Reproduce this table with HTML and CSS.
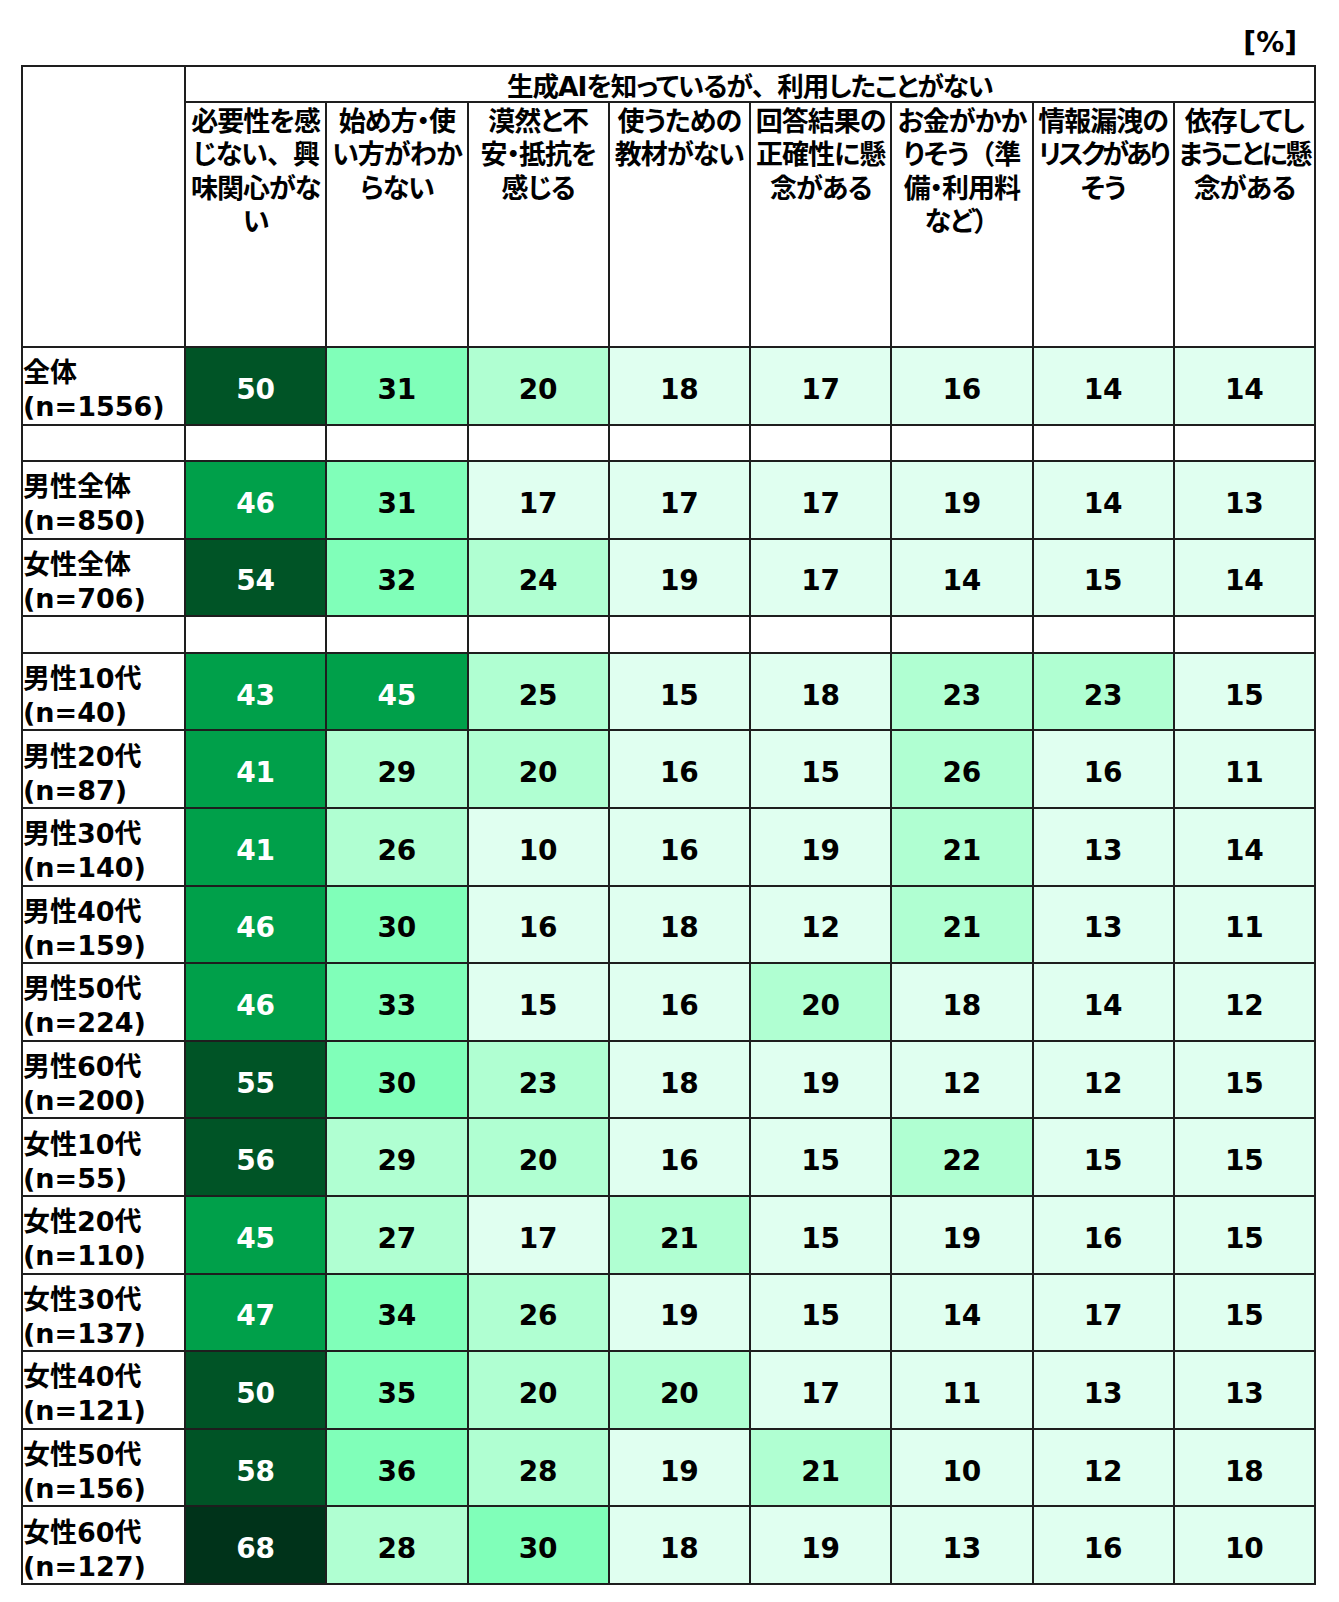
FILE: index.html
```html
<!DOCTYPE html>
<html lang="ja">
<head>
<meta charset="utf-8">
<title>生成AIを知っているが、利用したことがない理由</title>
<link rel="stylesheet" href="styles.css">
</head>
<body>
<div class="page">
  <div class="unit">[%]</div>
  <div class="grid">
    <div class="corner"></div>
    <div class="group">生成AIを知っているが<span class="fw">、</span>利用したことがない</div>
    <div class="head">必要性を感<br>じない<span class="fw">、</span>興<br>味関心がな<br>い</div>
    <div class="head">始め方・使<br>い方がわか<br>らない</div>
    <div class="head">漠然と不<br>安・抵抗を<br>感じる</div>
    <div class="head">使うための<br>教材がない</div>
    <div class="head">回答結果の<br>正確性に懸<br>念がある</div>
    <div class="head">お金がかか<br>りそう<span class="fw">（</span>準<br>備・利用料<br>など<span class="fw">）</span></div>
    <div class="head">情報漏洩の<br><span class="tight">リスクがあり</span><br>そう</div>
    <div class="head">依存してし<br><span class="snug">まうことに懸</span><br>念がある</div>

    <div class="label">全体<br>(n=1556)</div>
    <div class="cell v4">50</div><div class="cell v2">31</div><div class="cell v1">20</div><div class="cell v0">18</div><div class="cell v0">17</div><div class="cell v0">16</div><div class="cell v0">14</div><div class="cell v0">14</div>

    <div class="blank"></div><div class="blank"></div><div class="blank"></div><div class="blank"></div><div class="blank"></div><div class="blank"></div><div class="blank"></div><div class="blank"></div><div class="blank"></div>

    <div class="label">男性全体<br>(n=850)</div>
    <div class="cell v3">46</div><div class="cell v2">31</div><div class="cell v0">17</div><div class="cell v0">17</div><div class="cell v0">17</div><div class="cell v0">19</div><div class="cell v0">14</div><div class="cell v0">13</div>

    <div class="label">女性全体<br>(n=706)</div>
    <div class="cell v4">54</div><div class="cell v2">32</div><div class="cell v1">24</div><div class="cell v0">19</div><div class="cell v0">17</div><div class="cell v0">14</div><div class="cell v0">15</div><div class="cell v0">14</div>

    <div class="blank"></div><div class="blank"></div><div class="blank"></div><div class="blank"></div><div class="blank"></div><div class="blank"></div><div class="blank"></div><div class="blank"></div><div class="blank"></div>

    <div class="label">男性10代<br>(n=40)</div>
    <div class="cell v3">43</div><div class="cell v3">45</div><div class="cell v1">25</div><div class="cell v0">15</div><div class="cell v0">18</div><div class="cell v1">23</div><div class="cell v1">23</div><div class="cell v0">15</div>

    <div class="label">男性20代<br>(n=87)</div>
    <div class="cell v3">41</div><div class="cell v1">29</div><div class="cell v1">20</div><div class="cell v0">16</div><div class="cell v0">15</div><div class="cell v1">26</div><div class="cell v0">16</div><div class="cell v0">11</div>

    <div class="label">男性30代<br>(n=140)</div>
    <div class="cell v3">41</div><div class="cell v1">26</div><div class="cell v0">10</div><div class="cell v0">16</div><div class="cell v0">19</div><div class="cell v1">21</div><div class="cell v0">13</div><div class="cell v0">14</div>

    <div class="label">男性40代<br>(n=159)</div>
    <div class="cell v3">46</div><div class="cell v2">30</div><div class="cell v0">16</div><div class="cell v0">18</div><div class="cell v0">12</div><div class="cell v1">21</div><div class="cell v0">13</div><div class="cell v0">11</div>

    <div class="label">男性50代<br>(n=224)</div>
    <div class="cell v3">46</div><div class="cell v2">33</div><div class="cell v0">15</div><div class="cell v0">16</div><div class="cell v1">20</div><div class="cell v0">18</div><div class="cell v0">14</div><div class="cell v0">12</div>

    <div class="label">男性60代<br>(n=200)</div>
    <div class="cell v4">55</div><div class="cell v2">30</div><div class="cell v1">23</div><div class="cell v0">18</div><div class="cell v0">19</div><div class="cell v0">12</div><div class="cell v0">12</div><div class="cell v0">15</div>

    <div class="label">女性10代<br>(n=55)</div>
    <div class="cell v4">56</div><div class="cell v1">29</div><div class="cell v1">20</div><div class="cell v0">16</div><div class="cell v0">15</div><div class="cell v1">22</div><div class="cell v0">15</div><div class="cell v0">15</div>

    <div class="label">女性20代<br>(n=110)</div>
    <div class="cell v3">45</div><div class="cell v1">27</div><div class="cell v0">17</div><div class="cell v1">21</div><div class="cell v0">15</div><div class="cell v0">19</div><div class="cell v0">16</div><div class="cell v0">15</div>

    <div class="label">女性30代<br>(n=137)</div>
    <div class="cell v3">47</div><div class="cell v2">34</div><div class="cell v1">26</div><div class="cell v0">19</div><div class="cell v0">15</div><div class="cell v0">14</div><div class="cell v0">17</div><div class="cell v0">15</div>

    <div class="label">女性40代<br>(n=121)</div>
    <div class="cell v4">50</div><div class="cell v2">35</div><div class="cell v1">20</div><div class="cell v1">20</div><div class="cell v0">17</div><div class="cell v0">11</div><div class="cell v0">13</div><div class="cell v0">13</div>

    <div class="label">女性50代<br>(n=156)</div>
    <div class="cell v4">58</div><div class="cell v2">36</div><div class="cell v1">28</div><div class="cell v0">19</div><div class="cell v1">21</div><div class="cell v0">10</div><div class="cell v0">12</div><div class="cell v0">18</div>

    <div class="label">女性60代<br>(n=127)</div>
    <div class="cell v5">68</div><div class="cell v1">28</div><div class="cell v2">30</div><div class="cell v0">18</div><div class="cell v0">19</div><div class="cell v0">13</div><div class="cell v0">16</div><div class="cell v0">10</div>
  </div>
</div>
</body>
</html>
```
FILE: styles.css
```css
html, body {
  margin: 0;
  padding: 0;
  background: #ffffff;
}

body {
  font-family: "DejaVu Sans", "Noto Sans CJK JP", sans-serif;
  font-weight: 700;
  font-size: 27px;
  color: #000000;
  font-feature-settings: "palt";
}

.page {
  padding: 25px 0 0 21px;
  width: 1295px;
}

.unit {
  height: 36px;
  line-height: 36px;
  margin-bottom: 4px;
  text-align: right;
  padding-right: 19px;
  font-size: 28px;
}

.grid {
  display: grid;
  grid-template-columns: 161px repeat(8, 139.25px);
  grid-template-rows: 34px 243px 75.6px 34.5px 75.6px 75.6px 34.5px repeat(12, 75.6px);
  gap: 2px;
  padding: 2px;
  background: #1e1e1e;
  width: 1295px;
  box-sizing: border-box;
}

.corner {
  grid-row: 1 / span 2;
  background: #ffffff;
}

.group {
  grid-column: 2 / span 8;
  background: #ffffff;
  display: flex;
  align-items: center;
  justify-content: center;
  padding-top: 1px;
  white-space: nowrap;
  font-size: 26.5px;
  letter-spacing: -1px;
}

.fw {
  font-feature-settings: normal;
}

.head {
  background: #ffffff;
  text-align: center;
  line-height: 33.3px;
  padding-top: 2px;
  white-space: nowrap;
  letter-spacing: -1px;
}

.tight {
  letter-spacing: -3px;
}

.snug {
  letter-spacing: -2.2px;
}

.label {
  background: #ffffff;
  display: flex;
  flex-direction: column;
  justify-content: center;
  line-height: 34px;
  padding-top: 9px;
  white-space: nowrap;
}

.blank {
  background: #ffffff;
}

.cell {
  display: flex;
  align-items: center;
  justify-content: center;
  font-size: 28px;
  padding-top: 7px;
}

.v0 { background: #e0fff0; }
.v1 { background: #b0ffd2; }
.v2 { background: #80ffb9; }
.v3 { background: #00a04a; color: #ffffff; }
.v4 { background: #005426; color: #ffffff; }
.v5 { background: #00331a; color: #ffffff; }
```
